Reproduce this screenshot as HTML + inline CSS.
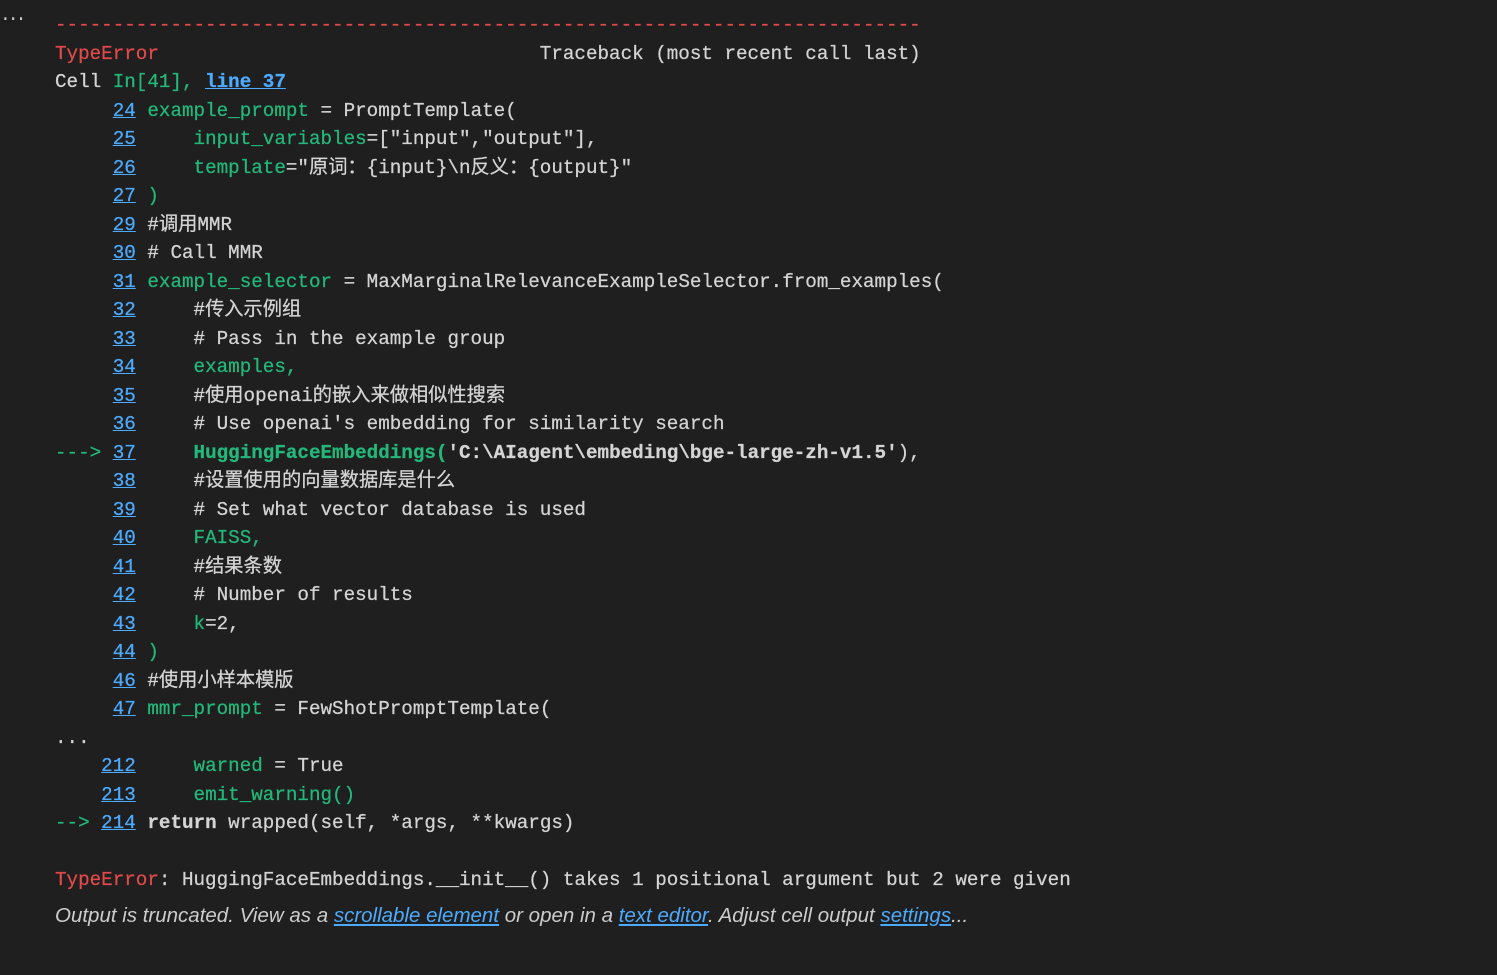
<!DOCTYPE html>
<html><head><meta charset="utf-8"><style>
html,body{margin:0;padding:0;background:#1f1f1f;width:1497px;height:975px;overflow:hidden}
pre{position:absolute;left:55px;top:11px;margin:0;font-family:"Liberation Mono","Noto Sans CJK SC",monospace;font-size:19.24px;line-height:28.5px;color:#d4d4d4;white-space:pre;-webkit-text-stroke:0.25px}
.r{color:#e04a4a}.g{color:#23b87a}.b{color:#4daafc;text-decoration:underline}.w{font-weight:bold}
.dots{position:absolute;left:0;top:6px;color:#ccc;font-family:"Liberation Mono",monospace;font-size:18px;letter-spacing:-3px}
.t{position:absolute;left:55px;top:904px;font-family:"Liberation Sans",sans-serif;font-style:italic;font-size:20.5px;color:#cccccc}
.t a{color:#4daafc;text-decoration:underline}
</style></head><body>
<div class="dots">...</div>
<pre><span class="r">---------------------------------------------------------------------------</span>
<span class="r">TypeError</span>                                 Traceback (most recent call last)
Cell <span class="g">In[41], </span><span class="b w">line 37</span>
     <span class="b">24</span> <span class="g">example_prompt</span> = PromptTemplate(
     <span class="b">25</span>     <span class="g">input_variables</span>=["input","output"],
     <span class="b">26</span>     <span class="g">template</span>="原词：{input}\n反义：{output}"
     <span class="b">27</span> <span class="g">)</span>
     <span class="b">29</span> #调用MMR
     <span class="b">30</span> # Call MMR
     <span class="b">31</span> <span class="g">example_selector</span> = MaxMarginalRelevanceExampleSelector.from_examples(
     <span class="b">32</span>     #传入示例组
     <span class="b">33</span>     # Pass in the example group
     <span class="b">34</span>     <span class="g">examples,</span>
     <span class="b">35</span>     #使用openai的嵌入来做相似性搜索
     <span class="b">36</span>     # Use openai's embedding for similarity search
<span class="g">---&gt; </span><span class="b">37</span>     <span class="g w">HuggingFaceEmbeddings(</span><span class="w">'C:\AIagent\embeding\bge-large-zh-v1.5'</span>),
     <span class="b">38</span>     #设置使用的向量数据库是什么
     <span class="b">39</span>     # Set what vector database is used
     <span class="b">40</span>     <span class="g">FAISS,</span>
     <span class="b">41</span>     #结果条数
     <span class="b">42</span>     # Number of results
     <span class="b">43</span>     <span class="g">k</span>=2,
     <span class="b">44</span> <span class="g">)</span>
     <span class="b">46</span> #使用小样本模版
     <span class="b">47</span> <span class="g">mmr_prompt</span> = FewShotPromptTemplate(
...
    <span class="b">212</span>     <span class="g">warned</span> = True
    <span class="b">213</span>     <span class="g">emit_warning()</span>
<span class="g">--&gt; </span><span class="b">214</span> <span class="w">return</span> wrapped(self, *args, **kwargs)

<span class="r">TypeError</span>: HuggingFaceEmbeddings.__init__() takes 1 positional argument but 2 were given</pre>
<div class="t">Output is truncated. View as a <a>scrollable element</a> or open in a <a>text editor</a>. Adjust cell output <a>settings</a>...</div>
</body></html>
